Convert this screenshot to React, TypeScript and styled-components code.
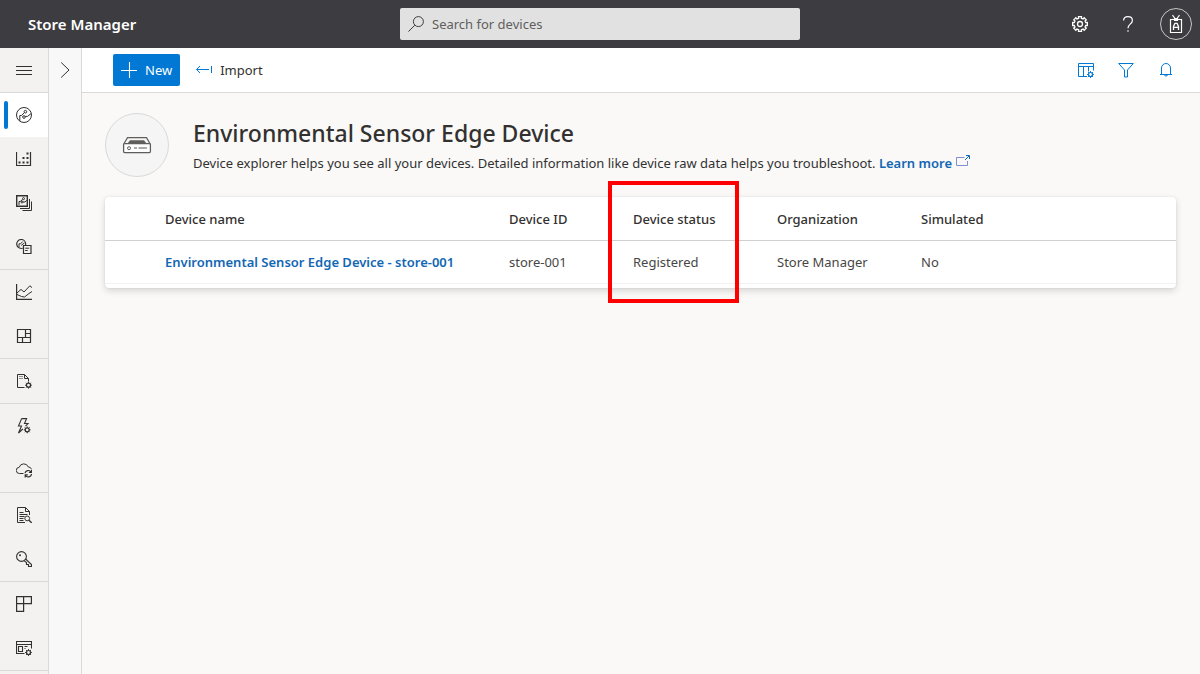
import React from "react";
import styled, { createGlobalStyle, css } from "styled-components";

const GlobalStyle = createGlobalStyle`
  *, *::before, *::after { box-sizing: border-box; }
  body {
    margin: 0;
    background: #faf9f8;
    color: #323130;
    font-family: "Segoe UI", "Noto Sans", "Open Sans", sans-serif;
    font-size: 13px;
    line-height: 20px;
  }
  button, input { font: inherit; color: inherit; }
  h1, p { margin: 0; }
`;

/* ---------- Icons ---------- */

const gearPath = (cx: number, cy: number, outer: number, inner: number) => {
  const points: string[] = [];
  for (let i = 0; i < 8; i++) {
    const a = (i * Math.PI) / 4;
    const corners: [number, number][] = [
      [a - 0.24, inner],
      [a - 0.2, outer],
      [a + 0.2, outer],
      [a + 0.24, inner],
    ];
    corners.forEach(([t, r]) =>
      points.push(`${(cx + r * Math.cos(t)).toFixed(2)} ${(cy + r * Math.sin(t)).toFixed(2)}`)
    );
  }
  return `M${points.join("L")}Z`;
};

const SvgIcon = styled.svg`
  display: block;
  flex: none;
  fill: none;
  stroke: currentColor;
  stroke-width: 1;
`;

type IconProps = { size?: number; box?: number; children: React.ReactNode };
const Icon = ({ size = 16, box = 16, children }: IconProps) => (
  <SvgIcon width={size} height={size} viewBox={`0 0 ${box} ${box}`} aria-hidden="true">
    {children}
  </SvgIcon>
);

const SmallGear = ({ x, y }: { x: number; y: number }) => (
  <>
    <circle cx={x} cy={y} r="2" strokeWidth="1.2" />
    <path
      d={`M${x} ${y - 3.4}v1.4M${x} ${y + 2}v1.4M${x - 3.4} ${y}h1.4M${x + 2} ${y}h1.4M${x - 2.4} ${y - 2.4}l1 1M${x + 1.4} ${y + 1.4}l1 1M${x - 2.4} ${y + 2.4}l1 -1M${x + 1.4} ${y - 1.4}l1 -1`}
    />
  </>
);

const MenuIcon = () => (
  <Icon><path d="M0 4.5h16M0 8.5h16M0 12.5h16" /></Icon>
);
const ChevronIcon = () => (
  <Icon><path d="M4.2 .5L12 8L4.2 15.5" /></Icon>
);
const SearchIcon = () => (
  <Icon><circle cx="10.4" cy="5.6" r="5" /><path d="M6.8 9.2L.4 15.6" /></Icon>
);
const SettingsIcon = () => (
  <Icon>
    <path d={gearPath(8, 8, 7.5, 5.9)} strokeWidth="1.3" />
    <circle cx="8" cy="8" r="2.5" strokeWidth="1.3" />
  </Icon>
);
const HelpIcon = () => (
  <Icon>
    <path d="M3.6 4.6C3.6 2.2 5.3 .6 8 .6s4.4 1.5 4.4 3.8c0 1.7-.9 2.6-2.2 3.7C8.8 9.300 8 10 8 12.200" strokeWidth="1.2" />
    <path d="M7.400 15h1.200" strokeWidth="1.4" />
  </Icon>
);
const BadgeIcon = () => (
  <Icon size={20} box={20}>
    <path d="M4.500 5.500h11v13h-11z" strokeWidth="1.2" />
    <path d="M6.500 1.200L9 4.500M13.500 1.200L11 4.500M8.500 4.500h3v2h-3z" strokeWidth="1.2" />
    <path d="M7.500 16v-3.500L9 9.300h2l1.500 3.200v3.500M7.500 13.300h5" strokeWidth="1.3" />
  </Icon>
);
const PlusIcon = () => (
  <Icon><path d="M0 8.500h16M8.500 0v16" strokeWidth="1.100" /></Icon>
);
const ImportIcon = () => (
  <Icon><path d="M.6 7.500H13M4 4L.6 7.500L4 11M15.500 4v7" /></Icon>
);
const ColumnsIcon = () => (
  <Icon>
    <path d="M.500 1.500h15v7M.500 1.500v13h8.500M.500 4.500h15M5.500 4.500v10M10.500 4.500v5" />
    <SmallGear x={12.5} y={12.5} />
  </Icon>
);
const FilterIcon = () => (
  <Icon><path d="M.700 1.500h14.600L9.500 8v7h-3V8z" /></Icon>
);
const BellIcon = () => (
  <Icon>
    <path d="M3.500 12.500V6a4.500 4.500 0 0 1 9 0v6.500M2 12.500h12M6.200 12.700a1.900 1.900 0 0 0 3.600 0" />
  </Icon>
);
const DevicesIcon = () => (
  <Icon>
    <circle cx="8" cy="8" r="7.500" />
    <circle cx="9.400" cy="4.700" r="1.300" />
    <circle cx="8" cy="10" r="1.300" />
    <path d="M8.400 5.600L5.500 8.500H3.800V14M9.200 9.400h2.300l3.600-2.800" />
  </Icon>
);
const GroupsIcon = () => (
  <Icon>
    <path d="M.500 1v13.500h14V1" strokeWidth="1.200" />
    <path d="M2.500 11.500h2M6.500 11.500h2M10.500 11.500h2M6.500 7h2M10.500 7h2M10.500 2.500h2" strokeWidth="2" />
  </Icon>
);
const TemplatesIcon = () => (
  <Icon>
    <path d="M.700 .700h10.600v10.600H.700z" strokeWidth="1.400" />
    <path d="M13.500 4v9.500H4M15.500 6.500v9H6.500" />
    <circle cx="7.500" cy="3.600" r="1" />
    <circle cx="6" cy="7" r="1" />
    <path d="M6.700 4.400L4.200 6.500H3V10M7 7h2l1.800-1.800" />
  </Icon>
);
const DeviceDocIcon = () => (
  <Icon>
    <circle cx="5.200" cy="5" r="4.500" strokeWidth="1.200" />
    <path d="M6.800 2.500L4.500 4.800H3V8M5.200 6.400l3.400-2.600" />
    <path d="M7.500 6.500h7.500v8H7.500z" fill="#f3f2f1" strokeWidth="1.200" />
    <path d="M9.200 9.200h4M9.200 11.500h2.500" />
  </Icon>
);
const AnalyticsIcon = () => (
  <Icon>
    <path d="M.600 0v15.400H16" strokeWidth="1.200" />
    <path d="M1 9l4-3.600L8 8l5.800-6.200L16 3.600M1 10.500L5.500 12.500L8.500 13L13 9.500L16 7.500" />
  </Icon>
);
const DashboardIcon = () => (
  <Icon>
    <path d="M1.500 1.500h13v13h-13zM1.500 9.500h13M9.500 1.500v8M9.500 5.500h5M6.500 9.500v5" strokeWidth="1.200" />
  </Icon>
);
const JobsIcon = () => (
  <Icon>
    <path d="M8.500 14.500h-7V1.500H8.500L12.500 5.500V8.500M8.500 1.500v4h4M3.500 3.500h1M5.500 3.500h1M3.500 5.500h1M5.500 5.500h1" />
    <SmallGear x={12.5} y={12.2} />
  </Icon>
);
const RulesIcon = () => (
  <Icon>
    <path d="M5.600 .600h5L8.500 5.500H12L9.500 8.200M5.600 .600L2.500 8H5.500L2.500 15L6.800 11" strokeWidth="1.100" />
    <SmallGear x={11.2} y={11.8} />
  </Icon>
);
const ExportIcon = () => (
  <Icon>
    <path d="M7.500 11.500H3.600a3.100 3.100 0 0 1-.4-6.200A4.800 4.800 0 0 1 12.300 5A3.200 3.200 0 0 1 15.400 7" />
    <path d="M9 11.200a3.300 3.300 0 0 1 6-1.200M15.500 7.800v2.600h-2.600M15.500 12a3.300 3.300 0 0 1-6 1.500M9.200 15.500v-2.600h2.600" strokeWidth="1.200" />
  </Icon>
);
const AuditIcon = () => (
  <Icon>
    <path d="M9 15.500H1.500V.500H9.500L13.500 4.500V8M9.500 .500v4h4M3.500 5.500h4M3.500 7.500h8M3.500 9.500h5M3.500 11.500h4M3.500 13.500h4" />
    <circle cx="11.200" cy="11.400" r="2.400" />
    <path d="M13 13.200L15.800 16" strokeWidth="1.300" />
  </Icon>
);
const KeyIcon = () => (
  <Icon>
    <circle cx="5.500" cy="5.500" r="4.900" strokeWidth="1.100" />
    <path d="M9.600 8L15.500 13.500V15.500H12.500V13.500H10.500V11.500L8 9.600" strokeWidth="1.100" />
    <circle cx="4" cy="4.200" r="1" fill="currentColor" stroke="none" />
  </Icon>
);
const AppTemplateIcon = () => (
  <Icon><path d="M.600 .600h14.800v7H.600zM.600 .600v14.800H7.600V.600" strokeWidth="1.200" /></Icon>
);
const CustomizeIcon = () => (
  <Icon>
    <path d="M8.500 13.500h-8v-12h15V8.500M.500 4.500h15M2.500 6.500h4v5h-4zM8.500 6.500h3M8.500 8.500h1" strokeWidth="1.100" />
    <SmallGear x={12.5} y={12.5} />
  </Icon>
);
const EdgeDeviceIcon = () => (
  <Icon size={32} box={32}>
    <path d="M2.800 15L6.500 8.600h19L29.200 15" strokeWidth="1.200" />
    <rect x="2.600" y="14.600" width="26.800" height="9" rx="1" fill="#fff" strokeWidth="1.300" />
    <path d="M9 11.200h14l2.500 3.400h-19z" fill="currentColor" stroke="none" />
    <circle cx="8" cy="19.200" r="1.500" />
    <path d="M13 19h3M17.500 19h8.500" strokeWidth="1.500" opacity=".7" />
  </Icon>
);
const OpenIcon = () => (
  <Icon size={14} box={14}>
    <path d="M8.500 3.500H.500v8h11V7" stroke="#7f8fd0" />
    <path d="M9 6L13 2M10 1.500h3.500v3.500" />
  </Icon>
);

/* ---------- Header ---------- */

const Header = styled.header`
  display: grid;
  grid-template-columns: 1fr minmax(200px, 400px) 1fr;
  align-items: center;
  height: 48px;
  padding: 0 8px;
  background: #3d3c41;
  color: #fff;
`;

const Brand = styled.div`
  padding-left: 20px;
`;

const AppName = styled.a`
  color: #fff;
  font-size: 15px;
  font-weight: 600;
  text-decoration: none;
`;

const SearchBox = styled.label`
  display: flex;
  align-items: center;
  gap: 8px;
  height: 32px;
  padding: 0 8px;
  border-radius: 2px;
  background: #e1e1e1;
  color: #3d3c41;
`;

const SearchInput = styled.input`
  flex: 1;
  min-width: 0;
  padding: 0;
  border: 0;
  outline: 0;
  background: transparent;
  &::placeholder { color: #605e5c; opacity: 1; }
`;

const HeaderActions = styled.div`
  display: flex;
  justify-content: flex-end;
  align-items: center;
  gap: 16px;
`;

const IconButton = styled.button<{ $round?: boolean }>`
  display: flex;
  align-items: center;
  justify-content: center;
  width: 32px;
  height: 32px;
  padding: 0;
  border: 0;
  background: transparent;
  cursor: pointer;
  ${(p) =>
    p.$round &&
    css`
      border: 1px solid #c8c6c4;
      border-radius: 50%;
    `}
`;

/* ---------- Side navigation ---------- */

const Body = styled.div`
  display: flex;
  min-height: calc(100vh - 48px);
`;

const Rail = styled.nav`
  flex: none;
  width: 49px;
  border-right: 1px solid #d9d9d9;
  background: #f3f2f1;
`;

const railCell = css`
  display: flex;
  align-items: center;
  justify-content: center;
  width: 48px;
  height: 44px;
  color: #323130;
`;

const MenuButton = styled.button`
  ${railCell}
  padding: 0;
  border: 0;
  background: transparent;
`;

const RailGroup = styled.ul`
  margin: 0;
  padding: 0;
  border-top: 1px solid #d9d9d9;
  list-style: none;
`;

const RailLink = styled.a<{ $active?: boolean }>`
  ${railCell}
  ${(p) =>
    p.$active &&
    css`
      position: relative;
      background: #fff;
      &::before {
        content: "";
        position: absolute;
        left: 4px;
        top: 8px;
        bottom: 8px;
        width: 4px;
        border-radius: 2px;
        background: #0078d4;
      }
    `}
`;

const ListPane = styled.aside`
  flex: none;
  width: 33px;
  border-right: 1px solid #d9d9d9;
  background: #f8f8f8;
`;

const PaneToggle = styled(IconButton)`
  height: 44px;
`;

/* ---------- Main area ---------- */

const Main = styled.main`
  flex: 1;
  min-width: 0;
`;

const Toolbar = styled.div`
  display: flex;
  align-items: center;
  gap: 16px;
  height: 45px;
  padding: 0 18px 0 31px;
  border-bottom: 1px solid #d9d9d9;
  background: #fff;
`;

const CommandButton = styled.button<{ $primary?: boolean }>`
  display: flex;
  align-items: center;
  gap: 8px;
  height: 32px;
  padding: 0;
  border: 0;
  border-radius: 2px;
  background: transparent;
  svg { color: #0078d4; }
  ${(p) =>
    p.$primary &&
    css`
      padding: 0 8px;
      background: #0078d4;
      color: #fff;
      svg { color: #fff; }
    `}
`;

const ViewActions = styled.div`
  display: flex;
  gap: 8px;
  margin-left: auto;
  color: #0078d4;
`;

const Content = styled.div`
  padding: 20px 24px 24px 23px;
`;

const Intro = styled.div`
  display: flex;
  align-items: center;
  gap: 24px;
  margin-bottom: 20px;
`;

const DeviceAvatar = styled.div`
  display: flex;
  flex: none;
  align-items: center;
  justify-content: center;
  width: 64px;
  height: 64px;
  border: 1px solid #d9d9d9;
  border-radius: 50%;
  background: #f5f5f5;
  color: #605e5c;
`;

const Title = styled.h1`
  padding-bottom: 4px;
  font-size: 23px;
  font-weight: 500;
  line-height: 32px;
`;

const Summary = styled.p`
  color: #323130;
`;

const TextLink = styled.a`
  color: #1267b4;
  font-weight: 600;
  text-decoration: none;
  svg { display: inline-block; margin-left: 4px; }
`;

const Card = styled.section`
  padding-bottom: 4px;
  border-radius: 4px;
  background: #fff;
  box-shadow: 0 3px 7px rgba(0, 0, 0, 0.14), 0 0 2px rgba(0, 0, 0, 0.1);
`;

const Table = styled.table`
  width: 100%;
  border-collapse: separate;
  border-spacing: 0;
  table-layout: fixed;
`;

const Column = styled.col<{ $width?: number }>`
  width: ${(p) => (p.$width ? `${p.$width}px` : "auto")};
`;

const HeadCell = styled.th`
  position: relative;
  height: 44px;
  padding: 0 12px;
  border-bottom: 1px solid #d2d0ce;
  font-weight: 500;
  text-align: left;
`;

const Cell = styled.td`
  height: 43px;
  padding: 0 12px;
  border-bottom: 1px solid #f3f2f1;
  color: #484644;
  white-space: nowrap;
`;

const Callout = styled.span`
  position: absolute;
  top: -16px;
  left: -13px;
  width: 131px;
  height: 122px;
  border: 4px solid #f00;
  pointer-events: none;
`;

const navGroups = [
  [
    { label: "Devices", icon: DevicesIcon, active: true },
    { label: "Device groups", icon: GroupsIcon },
    { label: "Device templates", icon: TemplatesIcon },
    { label: "Edge manifests", icon: DeviceDocIcon },
  ],
  [
    { label: "Data explorer", icon: AnalyticsIcon },
    { label: "Dashboards", icon: DashboardIcon },
  ],
  [{ label: "Jobs", icon: JobsIcon }],
  [
    { label: "Rules", icon: RulesIcon },
    { label: "Data export", icon: ExportIcon },
  ],
  [
    { label: "Audit logs", icon: AuditIcon },
    { label: "Permissions", icon: KeyIcon },
  ],
  [
    { label: "Application", icon: AppTemplateIcon },
    { label: "Customization", icon: CustomizeIcon },
  ],
  [],
] as { label: string; icon: () => React.ReactElement; active?: boolean }[][];

const devices = [
  {
    name: "Environmental Sensor Edge Device - store-001",
    id: "store-001",
    status: "Registered",
    organization: "Store Manager",
    simulated: "No",
  },
];

export default function App() {
  return (
    <>
      <GlobalStyle />
      <Header>
        <Brand><AppName href="#">Store Manager</AppName></Brand>
        <SearchBox>
          <SearchIcon />
          <SearchInput type="text" placeholder="Search for devices" aria-label="Search for devices" />
        </SearchBox>
        <HeaderActions>
          <IconButton aria-label="Settings"><SettingsIcon /></IconButton>
          <IconButton aria-label="Help"><HelpIcon /></IconButton>
          <IconButton $round aria-label="Account"><BadgeIcon /></IconButton>
        </HeaderActions>
      </Header>
      <Body>
        <Rail aria-label="Main">
          <MenuButton aria-label="Expand navigation"><MenuIcon /></MenuButton>
          {navGroups.map((group, i) => (
            <RailGroup key={i}>
              {group.map(({ label, icon: Glyph, active }) => (
                <li key={label}>
                  <RailLink href="#" $active={active} aria-label={label}><Glyph /></RailLink>
                </li>
              ))}
            </RailGroup>
          ))}
        </Rail>
        <ListPane>
          <PaneToggle aria-label="Show device templates"><ChevronIcon /></PaneToggle>
        </ListPane>
        <Main>
          <Toolbar>
            <CommandButton $primary><PlusIcon />New</CommandButton>
            <CommandButton><ImportIcon />Import</CommandButton>
            <ViewActions>
              <IconButton aria-label="Column options"><ColumnsIcon /></IconButton>
              <IconButton aria-label="Filter"><FilterIcon /></IconButton>
              <IconButton aria-label="Notifications"><BellIcon /></IconButton>
            </ViewActions>
          </Toolbar>
          <Content>
            <Intro>
              <DeviceAvatar><EdgeDeviceIcon /></DeviceAvatar>
              <div>
                <Title>Environmental Sensor Edge Device</Title>
                <Summary>
                  Device explorer helps you see all your devices. Detailed information like device raw
                  data helps you troubleshoot. <TextLink href="#">Learn more<OpenIcon /></TextLink>
                </Summary>
              </div>
            </Intro>
            <Card>
              <Table>
                <colgroup>
                  <Column $width={48} />
                  <Column $width={344} />
                  <Column $width={124} />
                  <Column $width={144} />
                  <Column $width={144} />
                  <Column />
                </colgroup>
                <thead>
                  <tr>
                    <HeadCell as="td" />
                    <HeadCell scope="col">Device name</HeadCell>
                    <HeadCell scope="col">Device ID</HeadCell>
                    <HeadCell scope="col">Device status<Callout /></HeadCell>
                    <HeadCell scope="col">Organization</HeadCell>
                    <HeadCell scope="col">Simulated</HeadCell>
                  </tr>
                </thead>
                <tbody>
                  {devices.map((d) => (
                    <tr key={d.id}>
                      <Cell />
                      <Cell><TextLink href="#">{d.name}</TextLink></Cell>
                      <Cell>{d.id}</Cell>
                      <Cell>{d.status}</Cell>
                      <Cell>{d.organization}</Cell>
                      <Cell>{d.simulated}</Cell>
                    </tr>
                  ))}
                </tbody>
              </Table>
            </Card>
          </Content>
        </Main>
      </Body>
    </>
  );
}
